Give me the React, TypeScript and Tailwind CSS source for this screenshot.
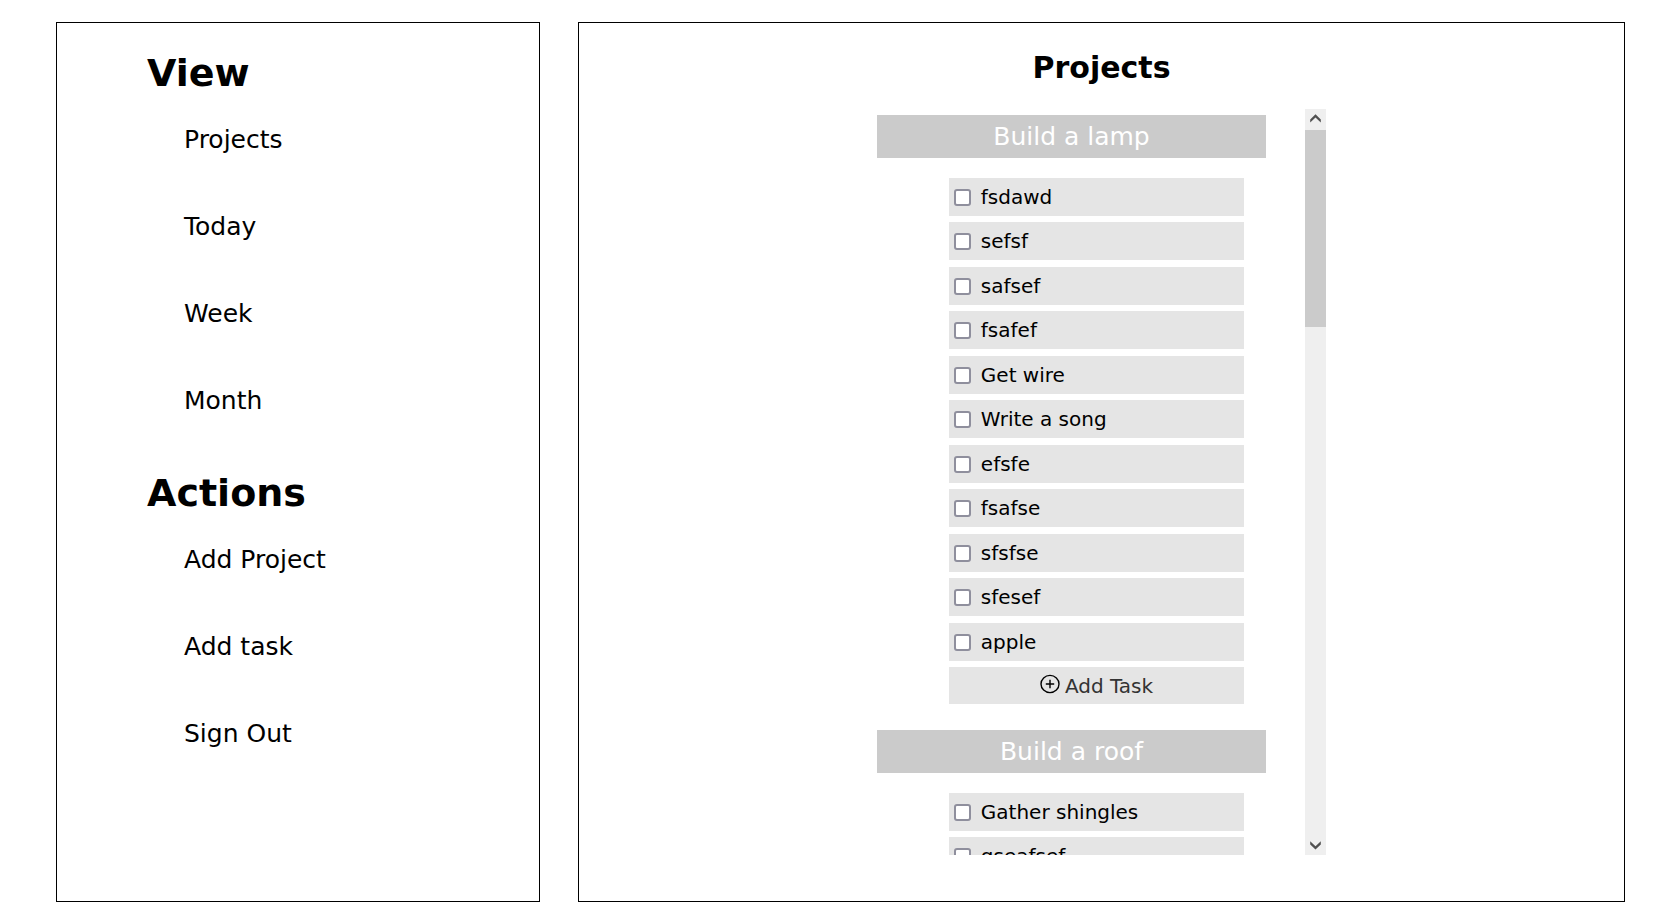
import { useRef } from "react";

type Project = { name: string; tasks: string[]; hasAdd: boolean };

const projects: Project[] = [
  {
    name: "Build a lamp",
    tasks: [
      "fsdawd",
      "sefsf",
      "safsef",
      "fsafef",
      "Get wire",
      "Write a song",
      "efsfe",
      "fsafse",
      "sfsfse",
      "sfesef",
      "apple",
    ],
    hasAdd: true,
  },
  { name: "Build a roof", tasks: ["Gather shingles", "gseafsef"], hasAdd: false },
];

const menus = [
  { title: "View", links: ["Projects", "Today", "Week", "Month"] },
  { title: "Actions", links: ["Add Project", "Add task", "Sign Out"] },
];

function Menu({ title, links }: { title: string; links: string[] }) {
  return (
    <section className="flex flex-col gap-[30px]">
      <h2 className="text-[38px] leading-[44px] font-bold">{title}</h2>
      <ul className="flex flex-col gap-[57px] pl-[37px]">
        {links.map((link) => (
          <li key={link} className="text-[25px] leading-[30px]">
            <a href="#">{link}</a>
          </li>
        ))}
      </ul>
    </section>
  );
}

function Task({ name }: { name: string }) {
  return (
    <li className="odd:mb-1.5 even:mb-[7px]">
      <label className="flex h-[38px] items-center gap-2.5 bg-[#e5e5e5] pl-[5px] text-[20px] leading-6">
        <input
          type="checkbox"
          className="size-[17px] shrink-0 appearance-none rounded-[3px] border-2 border-[#8f8f9d] bg-white checked:bg-blue-600"
        />
        {name}
      </label>
    </li>
  );
}

function PlusCircle() {
  return (
    <svg className="mb-1 size-5" viewBox="0 0 20 20" fill="none" stroke="#000" strokeWidth="1.4" aria-hidden="true">
      <ellipse cx="10" cy="10" rx="9" ry="8.6" />
      <path d="M10 5.8v8.4M5.8 10h8.4" />
    </svg>
  );
}

function Chevron({ down = false }: { down?: boolean }) {
  return (
    <svg className="size-[21px]" viewBox="0 0 21 21" fill="#505050" aria-hidden="true">
      <path
        d={
          down
            ? "M5.2 7.2 L10.5 12.2 L15.8 7.2 V10.4 L10.5 15.6 L5.2 10.4 Z"
            : "M5.2 13.6 L10.5 8.6 L15.8 13.6 V10.4 L10.5 5.2 L5.2 10.4 Z"
        }
      />
    </svg>
  );
}

export default function App() {
  const list = useRef<HTMLDivElement>(null);
  const scroll = (top: number) => list.current?.scrollBy({ top });

  return (
    <div className="grid h-screen grid-cols-[484fr_1047fr] grid-rows-1 gap-[38px] bg-white pt-[22px] pr-[52px] pb-[15px] pl-14 font-['DejaVu_Sans',Verdana,sans-serif] text-black">
      <nav className="flex flex-col gap-[55px] border border-black pt-7 pl-[90px]">
        {menus.map((menu) => (
          <Menu key={menu.title} title={menu.title} links={menu.links} />
        ))}
      </nav>

      <main className="flex min-h-0 flex-col items-center border border-black pt-[27px] pb-[46px]">
        <h1 className="text-[30px] leading-9 font-bold">Projects</h1>

        <div className="mt-[23px] flex min-h-0 w-[43%] flex-1">
          <div ref={list} className="flex-1 overflow-y-auto pt-1.5 pr-[39px] [scrollbar-width:none]">
            {projects.map((project) => (
              <section key={project.name} className="mb-[26px]">
                <h2 className="bg-[#cbcbcb] py-1.5 text-center text-[25px] leading-[31px] text-white">
                  {project.name}
                </h2>
                <div className="mt-5 mr-[22px] ml-[72px]">
                  <ul>
                    {project.tasks.map((task) => (
                      <Task key={task} name={task} />
                    ))}
                  </ul>
                  {project.hasAdd && (
                    <button
                      type="button"
                      className="flex h-[37px] w-full items-center justify-center gap-[5px] bg-[#e5e5e5] text-[20px] leading-6 text-[#333]"
                    >
                      <PlusCircle />
                      Add Task
                    </button>
                  )}
                </div>
              </section>
            ))}
          </div>

          <div className="flex w-[21px] shrink-0 flex-col bg-[#efefef]">
            <button type="button" aria-label="Scroll up" onClick={() => scroll(-44)}>
              <Chevron />
            </button>
            <div className="flex-1">
              <div className="h-[28%] bg-[#cbcbcb]" />
            </div>
            <button type="button" aria-label="Scroll down" onClick={() => scroll(44)}>
              <Chevron down />
            </button>
          </div>
        </div>
      </main>
    </div>
  );
}
